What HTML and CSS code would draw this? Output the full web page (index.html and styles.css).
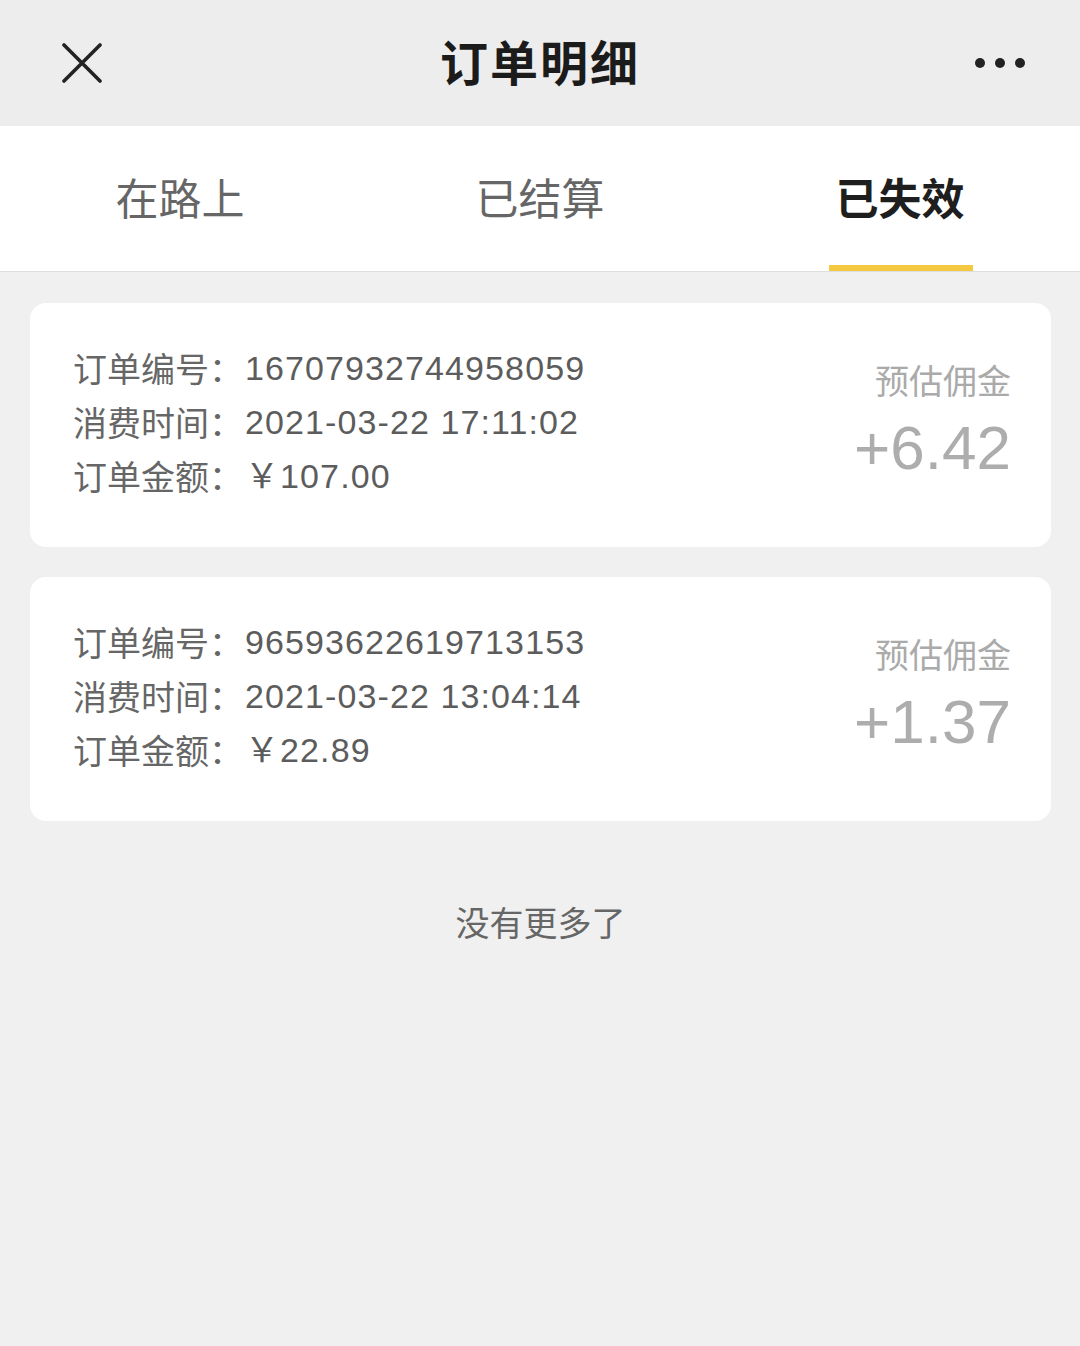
FILE: index.html
```html
<!DOCTYPE html>
<html>

<head>
    <meta charset="utf-8">
    <link rel="stylesheet" href="styles.css">
</head>

<body>
    <div class='topbar'>
        <div class='topbar-left'>
            <svg class='icon-close' width='40' height='40' viewBox='0 0 40 40'>
                <path d='M2 2 L38 38 M38 2 L2 38' stroke='#222' stroke-width='3.6' stroke-linecap='round' fill='none' />
            </svg>
        </div>
        <h1 class='title'>订单明细</h1>
        <div class='topbar-right'>
            <svg class='icon-more' width='50' height='12' viewBox='0 0 50 12'>
                <circle cx='5' cy='6' r='5' fill='#222' />
                <circle cx='25' cy='6' r='5' fill='#222' />
                <circle cx='45' cy='6' r='5' fill='#222' />
            </svg>
        </div>
    </div>

    <div class='tabs'>
        <div class='tab'>在路上</div>
        <div class='tab'>已结算</div>
        <div class='tab tab-active'>已失效</div>
    </div>

    <div class='list'>
        <div class='card'>
            <div class='info'>
                <div class='row'><span class='label'>订单编号：</span><span class='value'>16707932744958059</span></div>
                <div class='row'><span class='label'>消费时间：</span><span class='value'>2021-03-22 17:11:02</span></div>
                <div class='row'><span class='label'>订单金额：</span><span class='value'>￥107.00</span></div>
            </div>
            <div class='commission'>
                <div class='commission-label'>预估佣金</div>
                <div class='commission-value'>+6.42</div>
            </div>
        </div>

        <div class='card'>
            <div class='info'>
                <div class='row'><span class='label'>订单编号：</span><span class='value'>96593622619713153</span></div>
                <div class='row'><span class='label'>消费时间：</span><span class='value'>2021-03-22 13:04:14</span></div>
                <div class='row'><span class='label'>订单金额：</span><span class='value'>￥22.89</span></div>
            </div>
            <div class='commission'>
                <div class='commission-label'>预估佣金</div>
                <div class='commission-value'>+1.37</div>
            </div>
        </div>

        <div class='no-more'>没有更多了</div>
    </div>
</body>

</html>
```

FILE: styles.css
```css
body {
    font-family: "Liberation Sans", "Noto Sans CJK SC", sans-serif;
    background: #f0f0f0;
    margin: 0;
    color: #222;
}

.topbar {
    height: 126px;
    background: #ededed;
    display: grid;
    grid-template-columns: 1fr auto 1fr;
    align-items: center;
    padding: 0 55px;
}

.topbar-left,
.topbar-right {
    display: flex;
    align-items: center;
}

.topbar-left {
    padding-left: 7px;
}

.topbar-right {
    justify-content: flex-end;
}

.icon-close,
.icon-more {
    display: block;
}

.title {
    margin: 0 0 6px 0;
    font-family: "Noto Sans CJK SC", sans-serif;
    font-size: 48px;
    font-weight: bold;
    color: #1b1b1b;
    letter-spacing: 2px;
    line-height: 60px;
}

.tabs {
    height: 145px;
    background: #fff;
    border-bottom: 1px solid #dedede;
    display: flex;
}

.tab {
    flex: 1;
    display: flex;
    align-items: center;
    justify-content: center;
    position: relative;
    font-family: "Noto Sans CJK SC", sans-serif;
    font-size: 43px;
    line-height: 60px;
    padding-bottom: 6px;
    color: #666;
}

.tab-active {
    color: #1e1e1e;
    font-weight: bold;
}

.tab-active::after {
    content: '';
    position: absolute;
    bottom: 0;
    left: 50%;
    width: 144px;
    height: 6px;
    margin-left: -71px;
    background: #f5c842;
}

.list {
    padding: 31px 29px 0 30px;
}

.card {
    background: #fff;
    border-radius: 16px;
    padding: 38px 40px 44px 43px;
    margin-bottom: 30px;
    display: flex;
    justify-content: space-between;
    align-items: flex-start;
}

.row {
    height: 54px;
    font-size: 34px;
    line-height: 54px;
    color: #666;
    white-space: nowrap;
    display: flex;
    align-items: center;
}

.label {
    font-family: "Noto Sans CJK SC", sans-serif;
    color: #666;
}

.value {
    letter-spacing: 1.1px;
    color: #5c5c5c;
    margin-left: 2px;
}

.commission {
    margin-top: 12px;
    text-align: right;
}

.commission-label {
    font-family: "Noto Sans CJK SC", sans-serif;
    font-size: 34px;
    line-height: 54px;
    color: #aaa;
}

.commission-value {
    font-size: 62px;
    line-height: 82px;
    color: #adadad;
}

.no-more {
    text-align: center;
    font-family: "Noto Sans CJK SC", sans-serif;
    font-size: 34px;
    color: #666;
    margin-top: 76px;
}
```
